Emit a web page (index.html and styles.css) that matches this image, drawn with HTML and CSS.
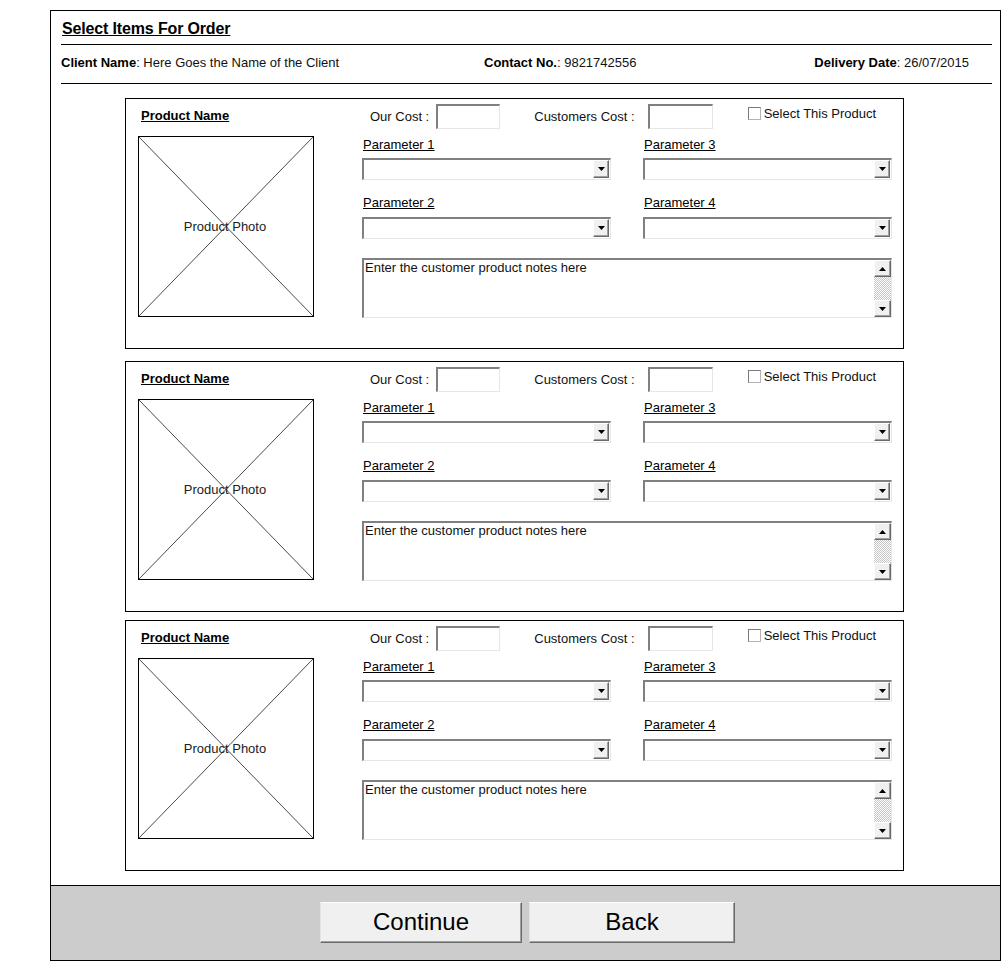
FILE: index.html
```html
<!DOCTYPE html>
<html lang="en">
<head>
<meta charset="utf-8">
<title>Select Items For Order</title>
<link rel="stylesheet" href="styles.css">
</head>
<body>
<div class="frame">
  <div class="title-row"><h1 class="title">Select Items For Order</h1></div>
  <div class="info-row">
    <div><b>Client Name</b>: Here Goes the Name of the Client</div>
    <div><b>Contact No.</b>: 9821742556</div>
    <div><b>Delivery Date</b>: 26/07/2015</div>
  </div>

  <div class="cards">
    <div class="card">
      <div class="card-left">
        <div class="product-name">Product Name</div>
        <div class="photo">
          <svg class="photo-x" viewBox="0 0 100 100" preserveAspectRatio="none"><line x1="0" y1="0" x2="100" y2="100"/><line x1="100" y1="0" x2="0" y2="100"/></svg>
          <span class="photo-label">Product Photo</span>
        </div>
      </div>
      <div class="card-right">
        <div class="cost-row">
          <span class="cost-label">Our Cost :</span>
          <span class="textbox"></span>
          <span class="cost-label cust">Customers Cost :</span>
          <span class="textbox wide"></span>
          <span class="select-product"><span class="checkbox"></span>Select This Product</span>
        </div>
        <div class="params">
          <div class="field"><span class="param-label">Parameter 1</span><div class="select"><span class="btn3d select-btn"><svg width="7" height="4" viewBox="0 0 7 4"><path d="M0 0h7L3.5 4z"/></svg></span></div></div>
          <div class="field"><span class="param-label">Parameter 3</span><div class="select"><span class="btn3d select-btn"><svg width="7" height="4" viewBox="0 0 7 4"><path d="M0 0h7L3.5 4z"/></svg></span></div></div>
          <div class="field"><span class="param-label">Parameter 2</span><div class="select"><span class="btn3d select-btn"><svg width="7" height="4" viewBox="0 0 7 4"><path d="M0 0h7L3.5 4z"/></svg></span></div></div>
          <div class="field"><span class="param-label">Parameter 4</span><div class="select"><span class="btn3d select-btn"><svg width="7" height="4" viewBox="0 0 7 4"><path d="M0 0h7L3.5 4z"/></svg></span></div></div>
        </div>
        <div class="notes">
          <span class="notes-text">Enter the customer product notes here</span>
          <span class="scrollbar">
            <span class="btn3d scroll-btn"><svg width="7" height="4" viewBox="0 0 7 4"><path d="M0 4h7L3.5 0z"/></svg></span>
            <span class="scroll-track"></span>
            <span class="btn3d scroll-btn"><svg width="7" height="4" viewBox="0 0 7 4"><path d="M0 0h7L3.5 4z"/></svg></span>
          </span>
        </div>
      </div>
    </div>

    <div class="card">
      <div class="card-left">
        <div class="product-name">Product Name</div>
        <div class="photo">
          <svg class="photo-x" viewBox="0 0 100 100" preserveAspectRatio="none"><line x1="0" y1="0" x2="100" y2="100"/><line x1="100" y1="0" x2="0" y2="100"/></svg>
          <span class="photo-label">Product Photo</span>
        </div>
      </div>
      <div class="card-right">
        <div class="cost-row">
          <span class="cost-label">Our Cost :</span>
          <span class="textbox"></span>
          <span class="cost-label cust">Customers Cost :</span>
          <span class="textbox wide"></span>
          <span class="select-product"><span class="checkbox"></span>Select This Product</span>
        </div>
        <div class="params">
          <div class="field"><span class="param-label">Parameter 1</span><div class="select"><span class="btn3d select-btn"><svg width="7" height="4" viewBox="0 0 7 4"><path d="M0 0h7L3.5 4z"/></svg></span></div></div>
          <div class="field"><span class="param-label">Parameter 3</span><div class="select"><span class="btn3d select-btn"><svg width="7" height="4" viewBox="0 0 7 4"><path d="M0 0h7L3.5 4z"/></svg></span></div></div>
          <div class="field"><span class="param-label">Parameter 2</span><div class="select"><span class="btn3d select-btn"><svg width="7" height="4" viewBox="0 0 7 4"><path d="M0 0h7L3.5 4z"/></svg></span></div></div>
          <div class="field"><span class="param-label">Parameter 4</span><div class="select"><span class="btn3d select-btn"><svg width="7" height="4" viewBox="0 0 7 4"><path d="M0 0h7L3.5 4z"/></svg></span></div></div>
        </div>
        <div class="notes">
          <span class="notes-text">Enter the customer product notes here</span>
          <span class="scrollbar">
            <span class="btn3d scroll-btn"><svg width="7" height="4" viewBox="0 0 7 4"><path d="M0 4h7L3.5 0z"/></svg></span>
            <span class="scroll-track"></span>
            <span class="btn3d scroll-btn"><svg width="7" height="4" viewBox="0 0 7 4"><path d="M0 0h7L3.5 4z"/></svg></span>
          </span>
        </div>
      </div>
    </div>

    <div class="card">
      <div class="card-left">
        <div class="product-name">Product Name</div>
        <div class="photo">
          <svg class="photo-x" viewBox="0 0 100 100" preserveAspectRatio="none"><line x1="0" y1="0" x2="100" y2="100"/><line x1="100" y1="0" x2="0" y2="100"/></svg>
          <span class="photo-label">Product Photo</span>
        </div>
      </div>
      <div class="card-right">
        <div class="cost-row">
          <span class="cost-label">Our Cost :</span>
          <span class="textbox"></span>
          <span class="cost-label cust">Customers Cost :</span>
          <span class="textbox wide"></span>
          <span class="select-product"><span class="checkbox"></span>Select This Product</span>
        </div>
        <div class="params">
          <div class="field"><span class="param-label">Parameter 1</span><div class="select"><span class="btn3d select-btn"><svg width="7" height="4" viewBox="0 0 7 4"><path d="M0 0h7L3.5 4z"/></svg></span></div></div>
          <div class="field"><span class="param-label">Parameter 3</span><div class="select"><span class="btn3d select-btn"><svg width="7" height="4" viewBox="0 0 7 4"><path d="M0 0h7L3.5 4z"/></svg></span></div></div>
          <div class="field"><span class="param-label">Parameter 2</span><div class="select"><span class="btn3d select-btn"><svg width="7" height="4" viewBox="0 0 7 4"><path d="M0 0h7L3.5 4z"/></svg></span></div></div>
          <div class="field"><span class="param-label">Parameter 4</span><div class="select"><span class="btn3d select-btn"><svg width="7" height="4" viewBox="0 0 7 4"><path d="M0 0h7L3.5 4z"/></svg></span></div></div>
        </div>
        <div class="notes">
          <span class="notes-text">Enter the customer product notes here</span>
          <span class="scrollbar">
            <span class="btn3d scroll-btn"><svg width="7" height="4" viewBox="0 0 7 4"><path d="M0 4h7L3.5 0z"/></svg></span>
            <span class="scroll-track"></span>
            <span class="btn3d scroll-btn"><svg width="7" height="4" viewBox="0 0 7 4"><path d="M0 0h7L3.5 4z"/></svg></span>
          </span>
        </div>
      </div>
    </div>
  </div>

  <div class="footer">
    <span class="btn3d btn btn-continue">Continue</span>
    <span class="btn3d btn btn-back">Back</span>
  </div>
</div>
</body>
</html>
```

FILE: styles.css
```css
* { box-sizing: border-box; }
html, body { margin: 0; padding: 0; background: #fff; }
body {
  font-family: "Liberation Sans", Arial, sans-serif;
  font-size: 13px;
  line-height: 15px;
  color: #111;
}

.frame {
  margin: 10px 0 0 50px;
  width: 951px;
  height: 951px;
  border: 1px solid #000;
  display: flex;
  flex-direction: column;
}

.title-row {
  margin: 0 8px 0 10px;
  padding: 9px 0 6px 1px;
  border-bottom: 1px solid #000;
}
.title {
  margin: 0;
  font-size: 16px;
  line-height: 18px;
  font-weight: bold;
  text-decoration: underline;
  color: #000;
  letter-spacing: -0.15px;
}

.info-row {
  margin: 0 8px 0 10px;
  padding: 10px 23px 13px 0;
  border-bottom: 1px solid #000;
  display: grid;
  grid-template-columns: 423px 1fr auto;
}
.info-row b { color: #000; }

.cards {
  margin: 14px 0 0 74px;
  width: 779px;
  display: flex;
  flex-direction: column;
}
.card {
  height: 251px;
  border: 1px solid #000;
  display: flex;
}
.card:nth-child(1) { margin-bottom: 12px; }
.card:nth-child(2) { margin-bottom: 8px; }

.card-left {
  width: 236px;
  padding: 9px 0 0 12px;
}
.product-name {
  padding-left: 3px;
  font-weight: bold;
  text-decoration: underline;
  color: #000;
}
.photo {
  position: relative;
  margin-top: 13px;
  width: 176px;
  height: 181px;
  border: 1px solid #000;
  display: flex;
  align-items: center;
  justify-content: center;
}
.photo-x {
  position: absolute;
  left: 0;
  top: 0;
  width: 100%;
  height: 100%;
}
.photo-x line {
  stroke: #4a4a4a;
  stroke-width: 1;
  vector-effect: non-scaling-stroke;
}
.photo-label {
  position: relative;
  margin-right: 2px;
  color: #222;
}

.card-right {
  width: 530px;
  padding-top: 5px;
}
.cost-row {
  display: flex;
  align-items: center;
  height: 25px;
}
.cost-label { margin-left: 8px; }
.cost-label.cust { margin-left: 34px; }

.textbox {
  width: 64px;
  height: 25px;
  margin-left: 7px;
  background: #fff;
  border-top: 2px solid #808080;
  border-left: 2px solid #808080;
  border-right: 1px solid #e6e6e6;
  border-bottom: 1px solid #e6e6e6;
}
.textbox.wide {
  width: 65px;
  margin-left: 13px;
}

.select-product {
  align-self: flex-start;
  margin: 2px 0 0 35px;
  display: flex;
  align-items: center;
  gap: 3px;
}
.checkbox {
  width: 13px;
  height: 13px;
  background: #fff;
  border: 1px solid #b4b4b4;
  border-top-color: #7a7a7a;
  border-left-color: #7a7a7a;
}

.params {
  margin-top: 8px;
  display: grid;
  grid-template-columns: 249px 249px;
  column-gap: 32px;
  row-gap: 15px;
}
.param-label {
  display: block;
  padding-left: 1px;
  text-decoration: underline;
  color: #000;
}
.select {
  margin-top: 6px;
  height: 22px;
  background: #fff;
  border-top: 2px solid #808080;
  border-left: 2px solid #808080;
  border-right: 1px solid #e6e6e6;
  border-bottom: 1px solid #e6e6e6;
  display: flex;
  justify-content: flex-end;
  padding: 0 1px 1px 0;
}
.field:nth-child(n+3) .select { margin-top: 7px; }

.btn3d {
  background: #f0f0f0;
  border-top: 1px solid #fff;
  border-left: 1px solid #fff;
  border-right: 1px solid #696969;
  border-bottom: 1px solid #696969;
  box-shadow: inset -1px -1px 0 #a0a0a0;
  display: flex;
  align-items: center;
  justify-content: center;
}
.btn3d svg { display: block; fill: #000; }
.select-btn { width: 16px; }

.notes {
  margin-top: 19px;
  height: 60px;
  background: #fff;
  border-top: 2px solid #808080;
  border-left: 2px solid #808080;
  border-right: 1px solid #e6e6e6;
  border-bottom: 1px solid #e6e6e6;
  display: flex;
}
.notes-text {
  flex: 1;
  padding-left: 1px;
  color: #111;
}
.scrollbar {
  width: 17px;
  display: flex;
  flex-direction: column;
  background: repeating-conic-gradient(#c4c4c4 0 25%, #fff 0 50%) 0 0 / 2px 2px;
}
.scroll-btn { height: 17px; }
.scroll-track { flex: 1; }

.footer {
  margin-top: auto;
  height: 75px;
  border-top: 1px solid #000;
  background: #cccccc;
  display: flex;
  justify-content: center;
  align-items: flex-start;
  gap: 7px;
  padding: 16px 0 0 4px;
}
.btn {
  height: 41px;
  padding-bottom: 2px;
  font-size: 24px;
  line-height: 28px;
  color: #000;
  border-top-color: #fdfdfd;
  border-left-color: #e3e3e3;
}
.btn-continue { width: 202px; }
.btn-back { width: 206px; }
```
